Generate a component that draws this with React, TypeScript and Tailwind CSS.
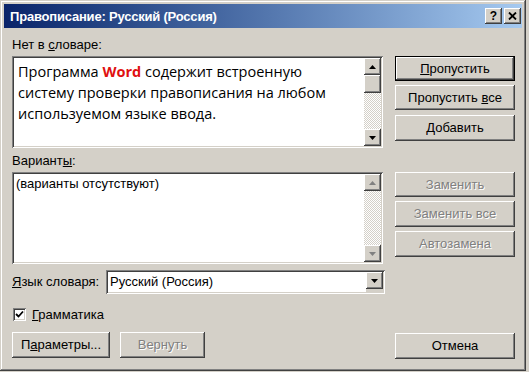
import React from "react";

const raised =
  "shadow-[inset_-1px_-1px_#404040,inset_1px_1px_#ffffff,inset_-2px_-2px_#808080,inset_2px_2px_#d4d0c8]";
const sunken =
  "shadow-[inset_1px_1px_#808080,inset_-1px_-1px_#ffffff,inset_2px_2px_#404040,inset_-2px_-2px_#d4d0c8]";

function Arrow({ dir, disabled }: { dir: "up" | "down"; disabled?: boolean }) {
  return (
    <svg width="7" height="4" viewBox="0 0 7 4">
      <polygon
        points={dir === "up" ? "3.5,0 7,4 0,4" : "0,0 7,0 3.5,4"}
        fill={disabled ? "#808080" : "#000000"}
      />
    </svg>
  );
}

function ScrollBtn({ dir, disabled }: { dir: "up" | "down"; disabled?: boolean }) {
  return (
    <div className={`w-[17px] h-[17px] shrink-0 bg-[#d4d0c8] flex items-center justify-center ${raised}`}>
      <Arrow dir={dir} disabled={disabled} />
    </div>
  );
}

function ScrollBar({ thumb, disabled }: { thumb?: boolean; disabled?: boolean }) {
  return (
    <div className="w-[17px] h-full flex flex-col shrink-0">
      <ScrollBtn dir="up" disabled={disabled} />
      {thumb && <div className={`w-[17px] h-[18px] shrink-0 bg-[#d4d0c8] ${raised}`} />}
      <div className="flex-1 [background-image:repeating-conic-gradient(#d4d0c8_0%_25%,#ffffff_0%_50%)] [background-size:2px_2px]" />
      <ScrollBtn dir="down" disabled={disabled} />
    </div>
  );
}

function Button({
  children,
  className = "",
  isDefault,
  disabled,
}: {
  children: React.ReactNode;
  className?: string;
  isDefault?: boolean;
  disabled?: boolean;
}) {
  const inner = (
    <div
      className={`w-full h-full bg-[#d4d0c8] flex items-center justify-center ${raised} ${
        disabled ? "text-[#808080] [text-shadow:1px_1px_#ffffff]" : "text-black"
      }`}
    >
      {children}
    </div>
  );
  if (isDefault) {
    return <div className={`border border-black ${className}`}>{inner}</div>;
  }
  return <div className={className}>{inner}</div>;
}

export default function App() {
  return (
    <div className="w-[529px] h-[372px] bg-[#d4d0c8] font-['Liberation_Sans',sans-serif] text-[13px] text-black overflow-hidden">
      <div
        className={`w-[526px] h-[371px] p-[4px] flex flex-col bg-[#d4d0c8] shadow-[inset_-1px_-1px_#404040,inset_1px_1px_#d4d0c8,inset_-2px_-2px_#808080,inset_2px_2px_#ffffff]`}
      >
        {/* Title bar */}
        <div className="h-[24px] shrink-0 bg-linear-to-r from-[#0a246a] to-[#a6caf0] flex items-center pl-[6px] pr-[1px]">
          <span className="text-white font-bold text-[13px] tracking-[-0.2px] leading-none">
            Правописание: Русский (Россия)
          </span>
          <div className="ml-auto flex gap-[2px]">
            <div className={`w-[17px] h-[16px] bg-[#d4d0c8] flex items-center justify-center ${raised}`}>
              <span className="font-bold text-[12px] leading-none">?</span>
            </div>
            <div className={`w-[17px] h-[16px] bg-[#d4d0c8] flex items-center justify-center ${raised}`}>
              <svg width="9" height="8" viewBox="0 0 9 8">
                <path d="M1 0.5 L8 7.5 M8 0.5 L1 7.5" stroke="#000" strokeWidth="1.8" />
              </svg>
            </div>
          </div>
        </div>

        {/* Content */}
        <div className="flex flex-col pl-[8px] pr-[7px]">
          <div className="flex">
            {/* Left column */}
            <div className="w-[371px] shrink-0 flex flex-col">
              <div className="mt-[9px] h-[16px] leading-[16px]">
                Нет в <u>с</u>ловаре:
              </div>
              <div className={`mt-[3px] h-[92px] p-[2px] flex ${sunken}`}>
                <div className="flex-1 bg-white pl-[4px] pt-[3px] font-['Open_Sans',sans-serif] text-[14.5px] leading-[21px]">
                  <p>
                    Программа <b className="font-bold text-[#e01010]">Word</b> содержит встроенную
                  </p>
                  <p>систему проверки правописания на любом</p>
                  <p>используемом языке ввода.</p>
                </div>
                <ScrollBar thumb />
              </div>

              <div className="mt-[5px] h-[16px] leading-[16px]">
                Вариант<u>ы</u>:
              </div>
              <div className={`mt-[3px] h-[92px] p-[2px] flex ${sunken}`}>
                <div className="flex-1 bg-white pl-[2px] pt-[2px] leading-[16px]">(варианты отсутствуют)</div>
                <ScrollBar disabled />
              </div>

              <div className="mt-[6px] h-[24px] flex items-center">
                <div className="w-[94px] shrink-0">
                  <u>Я</u>зык словаря:
                </div>
                <div className={`w-[279px] shrink-0 h-[24px] p-[2px] flex ${sunken}`}>
                  <div className="flex-1 bg-white pl-[2px] flex items-center">Русский (Россия)</div>
                  <ScrollBtn dir="down" />
                </div>
              </div>

              <div className="mt-[13px] h-[15px] flex items-center">
                <div className={`ml-[1px] w-[13px] h-[13px] p-[2px] bg-white ${sunken}`}>
                  <svg width="9" height="9" viewBox="0 0 9 9" className="block">
                    <path d="M1 4 L3.5 6.5 L8 1.5" stroke="#000" strokeWidth="1.8" fill="none" />
                  </svg>
                </div>
                <div className="ml-[6px]">
                  <u>Г</u>рамматика
                </div>
              </div>
            </div>

            {/* Right column */}
            <div className="w-[120px] ml-[12px] shrink-0 flex flex-col">
              <Button isDefault className="mt-[28px] h-[25px]">
                <span>
                  <u>П</u>ропустить
                </span>
              </Button>
              <Button className="mt-[4px] h-[25px]">
                <span>
                  Пропустить <u>в</u>се
                </span>
              </Button>
              <Button className="mt-[5px] h-[26px]">
                <span>
                  <u>Д</u>обавить
                </span>
              </Button>
              <Button disabled className="mt-[31px] h-[25px]">
                Заменить
              </Button>
              <Button disabled className="mt-[4px] h-[26px]">
                Заменить все
              </Button>
              <Button disabled className="mt-[4px] h-[26px]">
                Автозамена
              </Button>
            </div>
          </div>

          {/* Bottom row */}
          <div className="mt-[10px] h-[26px] flex">
            <Button className="w-[98px] h-[26px]">
              <span>
                П<u>а</u>раметры...
              </span>
            </Button>
            <Button disabled className="ml-[10px] w-[85px] h-[26px]">
              Вернуть
            </Button>
            <Button className="ml-auto w-[120px] h-[26px] mt-[1px]">
              Отмена
            </Button>
          </div>
        </div>
      </div>
    </div>
  );
}
